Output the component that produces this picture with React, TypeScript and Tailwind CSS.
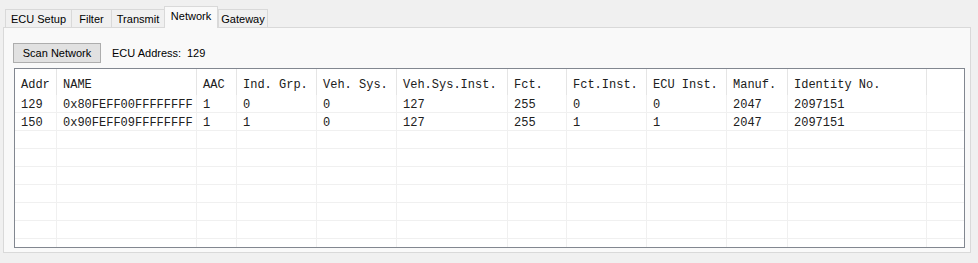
import React from 'react';

type Col = { label: string; w: string };

const columns: Col[] = [
  { label: 'Addr', w: 'w-[42px]' },
  { label: 'NAME', w: 'w-[140px]' },
  { label: 'AAC', w: 'w-[40px]' },
  { label: 'Ind. Grp.', w: 'w-[80px]' },
  { label: 'Veh. Sys.', w: 'w-[80px]' },
  { label: 'Veh.Sys.Inst.', w: 'w-[111px]' },
  { label: 'Fct.', w: 'w-[59px]' },
  { label: 'Fct.Inst.', w: 'w-[80px]' },
  { label: 'ECU Inst.', w: 'w-[80px]' },
  { label: 'Manuf.', w: 'w-[61px]' },
  { label: 'Identity No.', w: 'w-[139px]' },
];

const nodes: string[][] = [
  ['129', '0x80FEFF00FFFFFFFF', '1', '0', '0', '127', '255', '0', '0', '2047', '2097151'],
  ['150', '0x90FEFF09FFFFFFFF', '1', '1', '0', '127', '255', '1', '1', '2047', '2097151'],
];

const tabs = [
  { label: 'ECU Setup', w: 'w-[66px]' },
  { label: 'Filter', w: 'w-[40px]' },
  { label: 'Transmit', w: 'w-[53px]' },
  { label: 'Network', w: 'w-[54px]' },
  { label: 'Gateway', w: 'w-[50px]' },
];

const App: React.FC = () => {
  const activeTab = 'Network';
  // blank rows to fill the list view, last one gets clipped
  const rows = [...nodes, ...Array.from({ length: 7 }, () => Array(columns.length).fill(''))];

  return (
    <div className="w-[978px] h-[263px] bg-[#f0f0f0] pt-[6px] pl-[3px] font-['Liberation_Sans',Arial,sans-serif] text-[11px] text-black">
      {/* tab strip */}
      <div className="flex items-end h-[21px] pl-[2px]">
        {tabs.map((t, i) => {
          const active = t.label === activeTab;
          return active ? (
            <div
              key={t.label}
              className={`${t.w} h-[22px] -mb-px relative z-10 bg-[#f9f9f9] border border-b-0 border-[#d9d9d9] flex justify-center pt-[2px] leading-[14px]`}
            >
              {t.label}
            </div>
          ) : (
            <div
              key={t.label}
              className={`${t.w} h-[18px] bg-[#f0f0f0] border-t border-l border-[#d9d9d9] ${i === tabs.length - 1 ? 'border-r' : ''} flex justify-center pt-[2px] leading-[14px]`}
            >
              {t.label}
            </div>
          );
        })}
      </div>

      {/* tab page */}
      <div className="w-[968px] h-[226px] border border-[#d9d9d9] bg-[#f9f9f9] pt-[15px] pb-[4px]">
        <div className="flex items-center h-[20px] pl-[9px]">
          <button className="w-[88px] h-[20px] bg-[#e1e1e1] border border-[#adadad] text-[11px] leading-[18px]">
            Scan Network
          </button>
          <span className="ml-[11px] w-[75px]">ECU Address:</span>
          <span>129</span>
        </div>

        {/* list view */}
        <div className="mt-[5px] ml-[10px] w-[951px] h-[180px] border border-[#828790] bg-white overflow-hidden font-['Liberation_Mono','Courier_New',monospace] text-[12px] text-[#202020]">
          <div className="flex h-[26px]">
            {columns.map((c) => (
              <div key={c.label} className={`${c.w} shrink-0 border-r border-[#e5e5e5] pl-[6px] pt-[9px] leading-[14px] whitespace-nowrap`}>
                {c.label}
              </div>
            ))}
            <div className="flex-1" />
          </div>
          {rows.map((r, ri) => (
            <div key={ri} className="flex h-[18px] border-b border-[#f0f0f0]">
              {columns.map((c, ci) => (
                <div key={c.label} className={`${c.w} shrink-0 border-r border-[#f0f0f0] pl-[6px] pt-[3px] leading-[14px] whitespace-nowrap`}>
                  {r[ci]}
                </div>
              ))}
              <div className="flex-1" />
            </div>
          ))}
        </div>
      </div>
    </div>
  );
};

export default App;
